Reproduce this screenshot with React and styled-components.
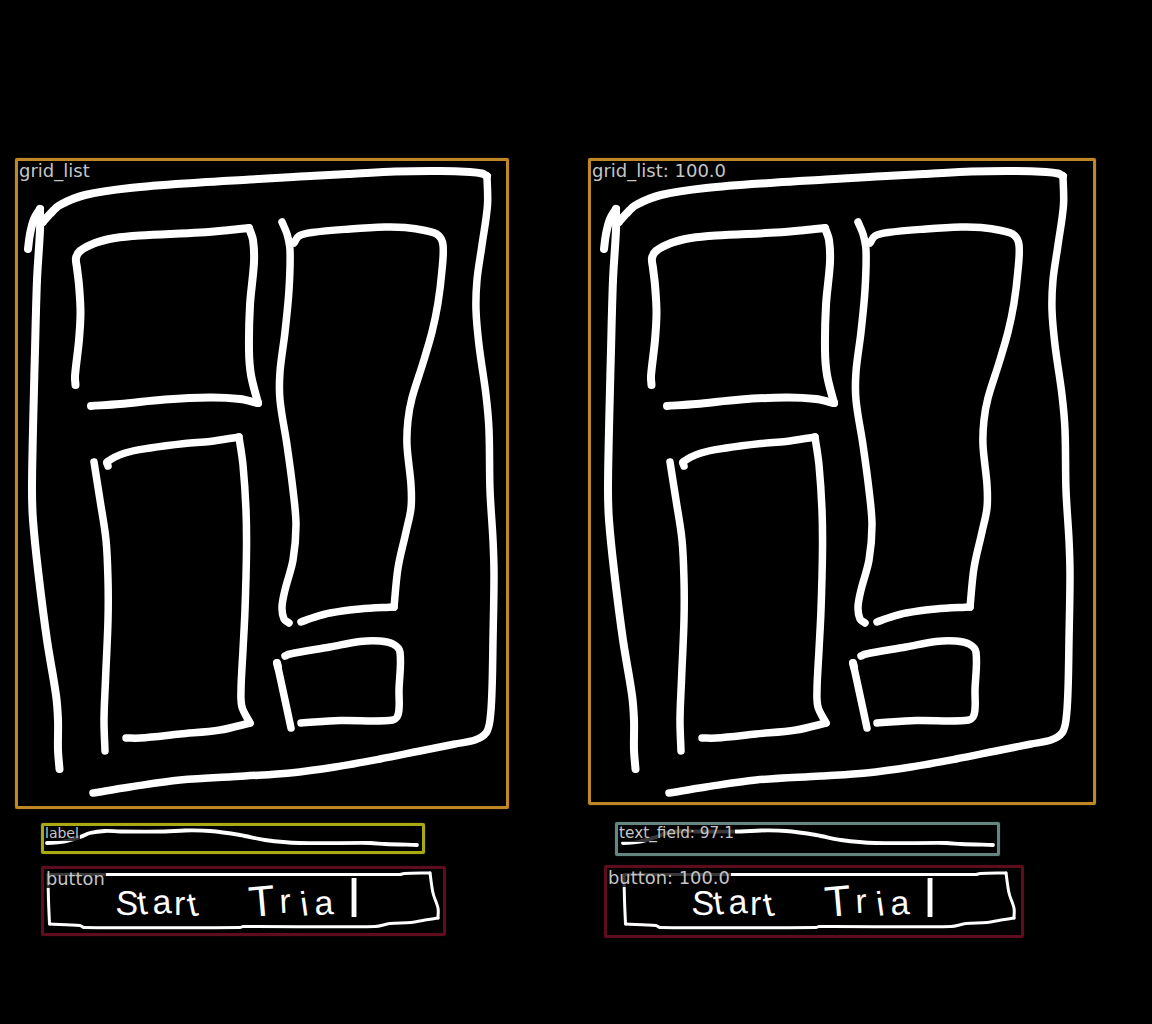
import React from 'react';
import styled, { createGlobalStyle } from 'styled-components';

const GlobalStyle = createGlobalStyle`
  body {
    margin: 0;
    background: #000;
  }
`;

const Comparison = styled.main`
  display: grid;
  grid-template-columns: 576px 576px;
  width: 1152px;
  height: 1024px;
  overflow: hidden;
  background: #000;
`;

const Panel = styled.section`
  position: relative;
  height: 1024px;
`;

const Ink = styled.svg`
  display: block;
  width: 576px;
  height: 1024px;
  fill: none;
  stroke: #fff;
  stroke-linecap: round;
  stroke-linejoin: round;
`;

const Handwriting = styled.text`
  fill: #fff;
  stroke: none;
  font-family: 'Liberation Sans', Arial, sans-serif;
`;

const Region = styled.div`
  position: absolute;
  left: ${(p) => p.$x}px;
  top: ${(p) => p.$y}px;
  width: ${(p) => p.$w}px;
  height: ${(p) => p.$h}px;
  box-sizing: border-box;
  border: 3px solid ${(p) => p.$color};
  border-radius: 2px;
  box-shadow: 0 0 1px ${(p) => p.$color};
`;

const Tag = styled.span`
  display: block;
  width: max-content;
  height: ${(p) => p.$line}px;
  margin-left: ${(p) => p.$inset || 0}px;
  padding: 0 1px;
  background: rgba(0, 0, 0, 0.78);
  color: #c6c6c6;
  font-family: 'DejaVu Sans', sans-serif;
  font-size: ${(p) => p.$size}px;
  line-height: ${(p) => p.$line}px;
  white-space: nowrap;
`;

// Pen strokes as sampled points: [width, x, y, x, y, ...]
const strokes = [
  [8, 28, 249, 30, 234, 34, 219, 40, 209],
  [8, 40, 209, 40, 230, 37, 280, 35, 350, 33, 430, 32, 490, 33, 520, 38, 570, 47, 640, 56, 695, 58, 720, 58, 750, 59.5, 769],
  [8, 43, 222, 50, 214, 60, 205, 85, 195, 130, 188, 200, 182.5, 250, 179.5, 300, 176.5, 350, 174, 395, 171.5, 440, 171, 470, 172, 482, 173.5, 487, 176],
  [7.5, 487, 176, 487.5, 205, 482, 245, 477, 280, 476, 310, 479, 345, 486, 395, 489, 430, 490, 490, 493, 540, 494, 575, 493, 640, 492, 690, 490, 720, 486, 733, 475, 740, 455, 744, 420, 751, 380, 759, 335, 767, 290, 773, 245, 776, 180, 780, 130, 787, 93, 793],
  [8, 75.5, 385, 75, 376, 79, 340, 80.5, 312, 79, 285, 77, 268, 76, 258, 80, 251, 95, 243, 115, 238, 140, 235.5, 200, 232.5, 235, 229.5, 249, 228],
  [8, 249, 228, 253, 240, 254, 262, 250, 305, 249, 350, 251, 375, 258, 403],
  [8, 258, 403, 240, 399, 210, 397.5, 165, 399.5, 120, 404, 91, 406],
  [7.5, 108, 466, 107, 462, 125, 453, 150, 448, 185, 443.5, 210, 441.5, 239, 437],
  [7.5, 239, 437, 243, 465, 246, 510, 246.5, 550, 245, 610, 243, 650, 241, 690, 242, 707, 250, 723],
  [7.5, 250, 723, 220, 730, 180, 734, 140, 738, 126, 738],
  [7.5, 94, 462, 100, 500, 106, 540, 108, 580, 108, 620, 105.5, 680, 104, 720, 105, 751],
  [7.5, 282, 222, 287, 234, 290, 250, 289, 290, 285, 332, 280, 372, 280, 400, 287, 445, 293, 490, 296, 525, 293, 560, 285, 590, 282, 607, 284, 619, 289, 623],
  [7.5, 294, 243, 299, 236, 312, 232.5, 350, 229, 385, 227, 405, 227.5, 425, 230.5, 438, 235, 443, 245, 442, 270, 438, 303, 432, 332, 423, 363, 412, 398, 408, 420, 407, 445, 411, 485, 411, 508, 406, 532, 398, 568, 394, 607],
  [7.5, 394, 607, 360, 609, 330, 613, 312, 618, 301, 622],
  [7.5, 285, 656, 290, 654, 330, 647, 360, 641.5, 380, 641, 393, 644, 400, 652, 399, 690, 398.5, 713, 393, 720, 340, 720.5, 301, 723],
  [8, 277, 663, 278, 667],
  [7.5, 277, 663, 285, 700, 291, 728],
  [3.8, 47, 843, 62, 842, 80, 837, 90, 833, 105, 831, 120, 831.5, 165, 831.5, 185, 830.5, 210, 831, 240, 835, 265, 840, 300, 843, 370, 843, 385, 844, 417, 845],
  [3, 48, 875, 48.5, 900, 49.5, 924],
  [3, 49.5, 924, 80, 925.5, 84, 927.5, 240, 927.5, 243, 926.5, 375, 926.5, 390, 923.5, 411, 922.5, 425, 920, 438, 918],
  [3, 438, 918, 438, 908, 433, 893, 430, 873],
  [3, 430, 873, 404, 873.5, 400, 874.5, 240, 874.5, 48, 874.5],
];

// Smooths the sampled points with a Catmull-Rom spline.
function toPath([, ...flat]) {
  const pts = [];
  for (let i = 0; i < flat.length; i += 2) pts.push([flat[i], flat[i + 1]]);
  let d = `M${pts[0]}`;
  for (let i = 0; i < pts.length - 1; i += 1) {
    const a = pts[i - 1] || pts[i];
    const b = pts[i];
    const c = pts[i + 1];
    const e = pts[i + 2] || c;
    const reach = Math.hypot(c[0] - b[0], c[1] - b[1]);
    const handle = (from, to) => {
      const len = Math.hypot(to[0] - from[0], to[1] - from[1]) || 1;
      return [((to[0] - from[0]) / len) * reach / 3, ((to[1] - from[1]) / len) * reach / 3];
    };
    const h1 = handle(a, c);
    const h2 = handle(b, e);
    d += `C${b[0] + h1[0]},${b[1] + h1[1]} ${c[0] - h2[0]},${c[1] - h2[1]} ${c}`;
  }
  return d;
}

function Sketch() {
  return (
    <Ink viewBox="0 0 576 1024">
      {strokes.map((s, i) => (
        <path key={i} d={toPath(s)} strokeWidth={s[0]} />
      ))}
      <Handwriting fontSize="34" y="914 915 914 915 917" x="115 139 153 174 190" rotate="4 -8 -3 0 -12">Start</Handwriting>
      <Handwriting fontSize="43" y="917" x="250" rotate="-5">
        T<tspan fontSize="34" y="913 916 915" x="280 302 315" rotate="-3 -8 -3">ria</tspan>
        <tspan fontSize="54" y="917" x="348" rotate="0">l</tspan>
      </Handwriting>
    </Ink>
  );
}

const truth = [
  { text: 'grid_list', x: 15, y: 158, w: 494, h: 651, color: '#c08726', size: 18, line: 19 },
  { text: 'label', x: 41, y: 823, w: 384, h: 31, color: '#a9a914', size: 14, line: 15 },
  { text: 'button', x: 41, y: 866, w: 405, h: 70, color: '#5e0d1e', size: 17.8, line: 19, inset: 1 },
];

const predicted = [
  { text: 'grid_list: 100.0', x: 12, y: 158, w: 508, h: 647, color: '#c08726', size: 18, line: 19 },
  { text: 'text_field: 97.1', x: 39, y: 822, w: 385, h: 34, color: '#638780', size: 15.3, line: 17 },
  { text: 'button: 100.0', x: 28, y: 865, w: 420, h: 73, color: '#5e0d1e', size: 17.9, line: 19 },
];

function AnnotatedSketch({ regions }) {
  return (
    <Panel>
      <Sketch />
      {regions.map((r) => (
        <Region key={r.text} $x={r.x} $y={r.y} $w={r.w} $h={r.h} $color={r.color}>
          <Tag $size={r.size} $line={r.line} $inset={r.inset}>{r.text}</Tag>
        </Region>
      ))}
    </Panel>
  );
}

export default function App() {
  return (
    <>
      <GlobalStyle />
      <Comparison>
        <AnnotatedSketch regions={truth} />
        <AnnotatedSketch regions={predicted} />
      </Comparison>
    </>
  );
}
